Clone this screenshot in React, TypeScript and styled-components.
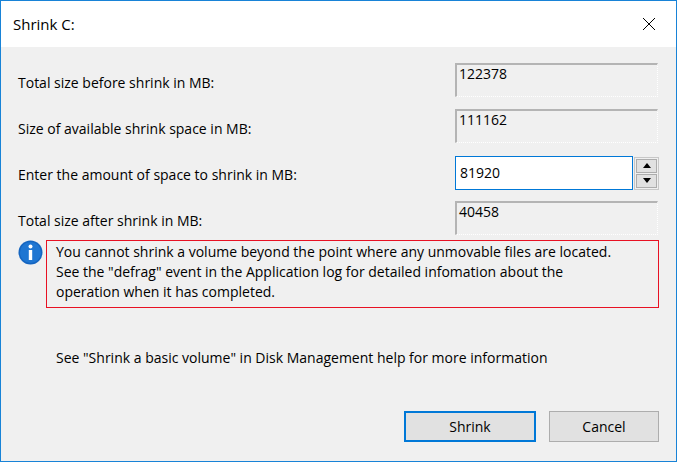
import React from "react";
import styled, { createGlobalStyle } from "styled-components";

const Global = createGlobalStyle`
  html, body { margin: 0; padding: 0; background: #fff; }
  body { font-family: "Open Sans", "Liberation Sans", Arial, sans-serif; color: #000; }
`;

const Window = styled.div`
  width: 677px; height: 462px; box-sizing: border-box;
  border: 1px solid #1883d7; background: #f0f0f0;
  display: flex; flex-direction: column;
`;
const TitleBar = styled.div`
  height: 46px; background: #fff; display: flex; align-items: center;
  justify-content: space-between; padding: 0 20px 0 12px; font-size: 15px;
`;
const Body = styled.div`
  flex: 1; display: flex; flex-direction: column; padding: 16px 17px 19px 17px;
`;
const Rows = styled.div`
  display: grid; grid-template-columns: 1fr 204px; row-gap: 10px;
`;
const Label = styled.div`
  font-size: 14px; display: flex; align-items: center; height: 34px; padding-top: 2px;
`;
const ReadBox = styled.div`
  width: 203px; height: 34px; box-sizing: border-box;
  border-top: 2px solid #b4b4b4; border-left: 2px solid #b4b4b4;
  border-right: 1px dotted #fff; border-bottom: 1px dotted #fff;
  font-size: 14px; padding: 0 2px; line-height: 18px;
`;
const SpinWrap = styled.div`
  display: flex; align-items: center; gap: 1px;
`;
const Input = styled.div`
  width: 180px; height: 34px; box-sizing: border-box; background: #fff;
  border: 1px solid #0078d7; font-size: 14px; padding: 6px 4px;
`;
const Spin = styled.div`
  display: flex; flex-direction: column; gap: 1px; border: 1px solid #c8c8c8; padding: 1px;
`;
const SpinBtn = styled.div`
  width: 21px; height: 14px; background: #e1e1e1; border: 1px solid #adadad; box-sizing: border-box;
  display: flex; align-items: center; justify-content: center;
`;
const InfoRow = styled.div`
  display: flex; align-items: flex-start; gap: 3px; margin-top: 3px;
`;
const InfoBox = styled.div`
  flex: 1; border: 1px solid #e81123; padding: 1px 9px 5px 9px; font-size: 14px; line-height: 20px;
  white-space: nowrap;
`;
const Help = styled.div`
  font-size: 14px; padding-left: 38px; margin-top: 40px;
`;
const Buttons = styled.div`
  margin-top: auto; display: flex; justify-content: flex-end; gap: 13px;
`;
const Button = styled.div<{ $primary?: boolean }>`
  height: 31px; box-sizing: border-box; display: flex; align-items: center; justify-content: center;
  font-size: 14px; background: #e1e1e1;
  width: ${p => (p.$primary ? "132px" : "110px")};
  border: ${p => (p.$primary ? "2px solid #0078d7" : "1px solid #adadad")};
`;

const Arrow = ({ up }: { up?: boolean }) => (
  <svg width="8" height="5" viewBox="0 0 8 5">
    <path d={up ? "M0 5 L4 0 L8 5 Z" : "M0 0 L4 5 L8 0 Z"} fill="#000" />
  </svg>
);

export default function App() {
  return (
    <>
      <Global />
      <Window>
        <TitleBar>
          <span>Shrink C:</span>
          <svg width="14" height="14" viewBox="0 0 14 14">
            <path d="M1 1 L13 13 M13 1 L1 13" stroke="#000" strokeWidth="1" />
          </svg>
        </TitleBar>
        <Body>
          <Rows>
            <Label>Total size before shrink in MB:</Label>
            <ReadBox>122378</ReadBox>
            <Label>Size of available shrink space in MB:</Label>
            <ReadBox>111162</ReadBox>
            <Label>Enter the amount of space to shrink in MB:</Label>
            <SpinWrap>
              <Input>81920</Input>
              <Spin>
                <SpinBtn><Arrow up /></SpinBtn>
                <SpinBtn><Arrow /></SpinBtn>
              </Spin>
            </SpinWrap>
            <Label>Total size after shrink in MB:</Label>
            <ReadBox>40458</ReadBox>
          </Rows>
          <InfoRow>
            <svg width="25" height="25" viewBox="0 0 25 25">
              <circle cx="12.5" cy="12.5" r="12" fill="#1565c0" />
              <circle cx="12.5" cy="12.5" r="10.5" fill="#1f76d2" />
              <circle cx="12.5" cy="6.5" r="2" fill="#fff" />
              <rect x="10.8" y="10" width="3.4" height="10" fill="#fff" />
            </svg>
            <InfoBox>
              You cannot shrink a volume beyond the point where any unmovable files are located.
              <br />
              See the "defrag" event in the Application log for detailed infomation about the
              <br />
              operation when it has completed.
            </InfoBox>
          </InfoRow>
          <Help>See "Shrink a basic volume" in Disk Management help for more information</Help>
          <Buttons>
            <Button $primary>Shrink</Button>
            <Button>Cancel</Button>
          </Buttons>
        </Body>
      </Window>
    </>
  );
}
